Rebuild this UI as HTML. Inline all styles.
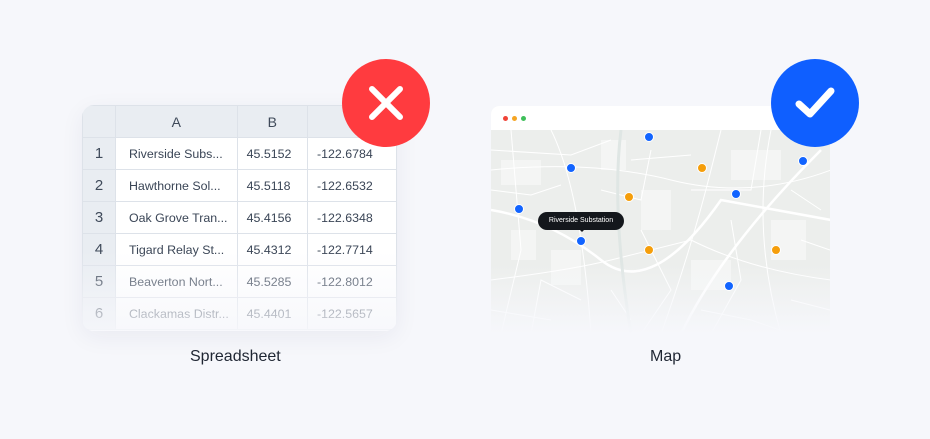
<!DOCTYPE html>
<html><head><style>
body{margin:0;width:930px;height:439px;background:#f6f7fb;font-family:"Liberation Sans",sans-serif;position:relative;overflow:hidden}
.sheet{position:absolute;left:82px;top:105px;width:315px;height:226px;border-radius:12px;overflow:hidden;background:#fff;box-shadow:0 6px 24px rgba(30,40,80,.06)}
table{border-collapse:collapse;font-size:12.4px;color:#3a4556;table-layout:fixed}
td{height:31px;border:1px solid #dde2e9;padding:0;white-space:nowrap;overflow:hidden}
.h td{background:#e9edf2;text-align:center;font-size:14px;color:#3f4a5a}
td.n{background:#e9edf2;text-align:center;font-size:15px;color:#3f4a5a}
.fade{position:absolute;left:0;right:0;bottom:0;height:80px;background:linear-gradient(rgba(246,247,251,0),rgba(246,247,251,.85))}
.circ{position:absolute;width:88px;height:88px;border-radius:50%}
.lbl{position:absolute;top:348px;font-size:16px;color:#1f2633}
.map{position:absolute;left:491px;top:106px;width:339px;height:228px;border-radius:8px 8px 0 0;overflow:hidden;background:#eceeec}
.dot{position:absolute;width:8px;height:8px;border-radius:50%;border:1.5px solid #fff;margin:-5.5px 0 0 -5.5px}
.b{background:#1264ff}.o{background:#f59e0b}
</style></head><body>
<div class="sheet">
<table>
<colgroup><col style="width:34px"><col style="width:122px"><col style="width:71px"><col style="width:90px"></colgroup>
<tr class="h"><td class="n"></td><td>A</td><td>B</td><td>C</td></tr>
<tr><td class="n">1</td><td style="padding-left:13px">Riverside Subs...</td><td style="padding-left:9px">45.5152</td><td style="padding-left:9px">-122.6784</td></tr>
<tr><td class="n">2</td><td style="padding-left:13px">Hawthorne Sol...</td><td style="padding-left:9px">45.5118</td><td style="padding-left:9px">-122.6532</td></tr>
<tr><td class="n">3</td><td style="padding-left:13px">Oak Grove Tran...</td><td style="padding-left:9px">45.4156</td><td style="padding-left:9px">-122.6348</td></tr>
<tr><td class="n">4</td><td style="padding-left:13px">Tigard Relay St...</td><td style="padding-left:9px">45.4312</td><td style="padding-left:9px">-122.7714</td></tr>
<tr><td class="n">5</td><td style="padding-left:13px">Beaverton Nort...</td><td style="padding-left:9px">45.5285</td><td style="padding-left:9px">-122.8012</td></tr>
<tr><td class="n">6</td><td style="padding-left:13px">Clackamas Distr...</td><td style="padding-left:9px">45.4401</td><td style="padding-left:9px">-122.5657</td></tr>
</table>
<div class="fade"></div>
</div>
<div class="circ" style="left:342px;top:59px;background:#ff3b3f">
<svg width="88" height="88" viewBox="0 0 88 88"><path d="M30 30L58 58M58 30L30 58" stroke="#fff" stroke-width="6" stroke-linecap="round"/></svg></div>

<div class="map">
<div style="position:absolute;left:0;top:0;right:0;height:24px;background:#fff"></div>
<div style="position:absolute;left:12px;top:10px;width:5px;height:5px;border-radius:50%;background:#f04438"></div>
<div style="position:absolute;left:21px;top:10px;width:5px;height:5px;border-radius:50%;background:#f5a524"></div>
<div style="position:absolute;left:30px;top:10px;width:5px;height:5px;border-radius:50%;background:#3fbf5a"></div>
<svg style="position:absolute;left:0;top:24px" width="339" height="204" fill="none" stroke="#fff" stroke-width="1">
<g fill="#f4f5f4" stroke="none">
<rect x="10" y="30" width="40" height="25"/><rect x="150" y="60" width="30" height="40"/><rect x="240" y="20" width="50" height="30"/><rect x="60" y="120" width="30" height="35"/><rect x="200" y="130" width="40" height="30"/><rect x="280" y="90" width="35" height="40"/><rect x="110" y="10" width="25" height="30"/><rect x="20" y="100" width="25" height="30"/>
</g>
<path d="M0 80 Q60 90 110 130 T230 70 L340 90" stroke-width="2.5"/>
<path d="M170 204 Q200 120 220 40 L230 0"/>
<path d="M190 204 Q230 120 330 20" stroke-width="2.5"/>
<path d="M0 150 Q80 140 120 130 L200 110 Q260 140 340 150"/>
<path d="M60 0 Q90 60 100 204"/><path d="M280 0 Q260 100 290 204"/>
<path d="M0 40 Q100 30 180 50 T340 40"/>
<path d="M0 20 L80 25 L120 10 M0 60 L40 65 L70 55 M20 0 L30 120 L10 204 M40 204 L50 150 L90 170 M110 60 L150 70 L160 20 M150 100 L180 160 L150 204 M200 60 L260 60 L270 0 M240 90 L250 150 L220 204 M300 60 L330 80 M300 170 L339 180 M0 180 L60 190 M140 30 L200 25 M210 180 L260 190 L300 204 M310 110 L339 120 M120 160 L140 190"/>
<path d="M130 0 Q120 80 140 204" stroke="#dfe6e4" stroke-width="3"/>
</svg>
<div style="position:absolute;left:0;right:0;bottom:0;height:70px;background:linear-gradient(rgba(246,247,251,0),#f6f7fb)"></div>
</div>
<div class="dot b" style="left:649px;top:137px"></div>
<div class="dot b" style="left:571px;top:168px"></div>
<div class="dot b" style="left:803px;top:161px"></div>
<div class="dot b" style="left:736px;top:194px"></div>
<div class="dot b" style="left:519px;top:209px"></div>
<div class="dot b" style="left:581px;top:241px"></div>
<div class="dot b" style="left:729px;top:286px"></div>
<div class="dot o" style="left:702px;top:168px"></div>
<div class="dot o" style="left:629px;top:197px"></div>
<div class="dot o" style="left:649px;top:250px"></div>
<div class="dot o" style="left:776px;top:250px"></div>
<div style="position:absolute;left:538px;top:212px;width:86px;height:18px;border-radius:9px;background:#14171c;color:#fff;font-size:7px;line-height:18px;text-align:center">Riverside Substation</div>
<div style="position:absolute;left:579px;top:229px;border:3px solid transparent;border-top-color:#14171c;border-bottom:0"></div>
<div class="circ" style="left:771px;top:59px;background:#0f5fff">
<svg width="88" height="88" viewBox="0 0 88 88"><path d="M28 45L39 55L60 32" stroke="#fff" stroke-width="7" fill="none" stroke-linecap="round" stroke-linejoin="round"/></svg></div>

<div class="lbl" style="left:190px">Spreadsheet</div>
<div class="lbl" style="left:650px">Map</div>
</body></html>
